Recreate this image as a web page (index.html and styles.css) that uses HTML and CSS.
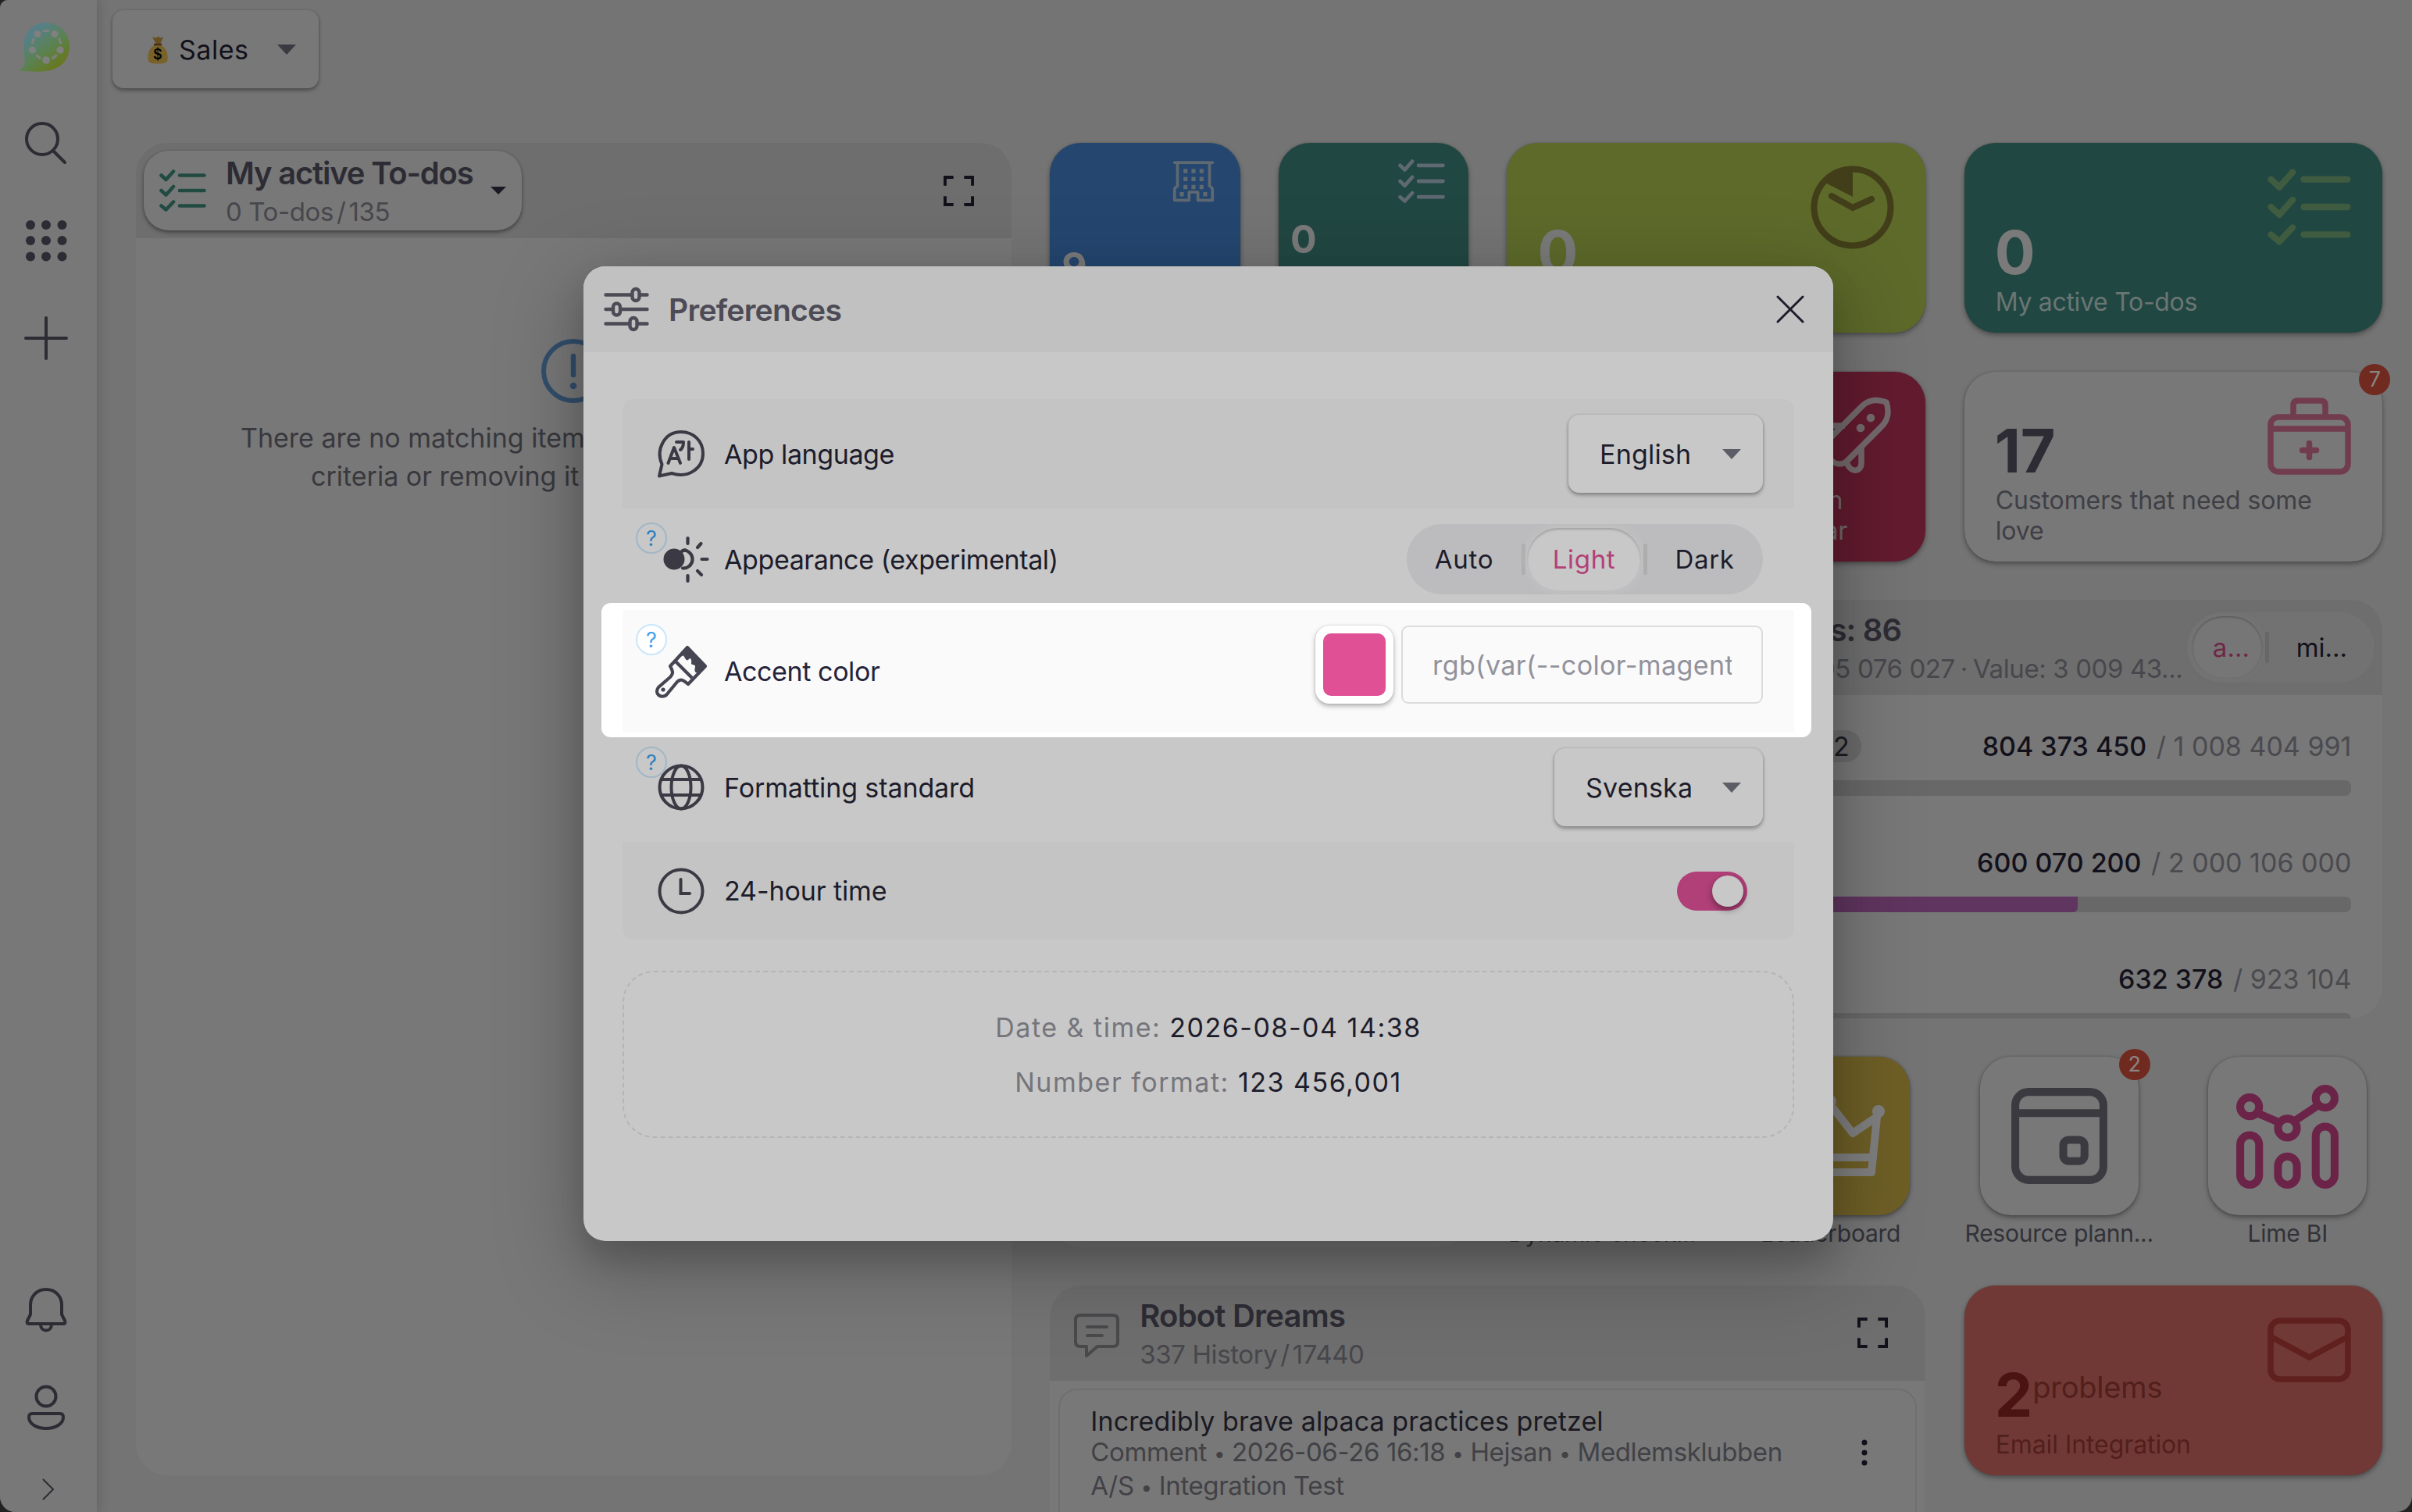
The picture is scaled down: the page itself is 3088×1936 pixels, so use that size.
FILE: index.html
```html
<!DOCTYPE html>
<html lang="en">
<head>
  <meta charset="UTF-8" />
  <meta name="viewport" content="width=device-width, initial-scale=1.0"/>
  <title>Preferences</title>
  <link rel="stylesheet" href="styles.css">
</head>
<body>
  <svg class="defs" width="0" height="0">
    <defs>
      <symbol id="todo" viewBox="0 0 60 54" preserveAspectRatio="none">
        <g fill="none" stroke="currentColor" stroke-width="4.6" stroke-linecap="round" stroke-linejoin="round">
          <path d="M2.5 7.5l6 5.500L18 2.500M26 7.500h31.500"/>
          <path d="M2.500 27l6 5.500L18 22M26 27h31.500"/>
          <path d="M2.500 46.500l6 5L18 41.500M26 46.500h31.500"/>
        </g>
      </symbol>
      <symbol id="expand" viewBox="0 0 40 40">
        <path d="M2 13V2h11M27 2h11v11M38 27v11H27M13 38H2V27" fill="none" stroke="currentColor" stroke-width="4"/>
      </symbol>
    </defs>
  </svg>

  <div class="app">
    <nav class="sidebar">
      <svg class="logo" viewBox="0 0 64 64">
        <defs>
          <linearGradient id="lime" x1="0.1" y1="0.1" x2="0.75" y2="0.9">
            <stop offset="0.2" stop-color="#568086"/>
            <stop offset="0.6" stop-color="#5b8252"/>
            <stop offset="1" stop-color="#67781f"/>
          </linearGradient>
        </defs>
        <path d="M34 0C51 0 64 13 64 30C64 51 48 62 28 62.500C18 63 6 62.500 1 61.500C-1 60 1 59 3 58C8 54 7 49 6 42C5 36 5 31 5.500 26C7 10 19 0 34 0Z" fill="url(#lime)"/>
        <g fill="#808080">
          <circle cx="23" cy="14.500" r="4.600"/><circle cx="45" cy="14.500" r="4.600"/>
          <circle cx="16.500" cy="35" r="4.600"/><circle cx="52" cy="35" r="4.600"/><circle cx="34" cy="48" r="4.800"/>
        </g>
        <path d="M31 10.500h6M51 21l1.600 5M18 21l-1.600 5M22 42l4 3.500M47 42l-4.500 3.500" stroke="#808080" stroke-width="3" stroke-linecap="round"/>
      </svg>
      <svg class="nav-icon" viewBox="0 0 60 60">
        <g fill="none" stroke="currentColor" stroke-width="4" stroke-linecap="round"><circle cx="25" cy="25" r="20"/><path d="M39 40l15 15"/></g>
      </svg>
      <svg class="nav-icon" viewBox="0 0 60 60">
        <g fill="currentColor">
          <circle cx="10" cy="10" r="6"/><circle cx="30" cy="10" r="6"/><circle cx="50.500" cy="10" r="6"/>
          <circle cx="10" cy="30" r="6"/><circle cx="30" cy="30" r="6"/><circle cx="50.500" cy="30" r="6"/>
          <circle cx="10" cy="50.500" r="6"/><circle cx="30" cy="50.500" r="6"/><circle cx="50.500" cy="50.500" r="6"/>
        </g>
      </svg>
      <svg class="nav-icon" viewBox="0 0 60 60">
        <path d="M4 30h52M30 4v52" stroke="currentColor" stroke-width="4" stroke-linecap="round"/>
      </svg>
      <span class="spacer"></span>
      <svg class="nav-icon" viewBox="0 0 60 60">
        <g fill="none" stroke="currentColor" stroke-width="4" stroke-linejoin="round">
          <path d="M30 3C18 3 10 12 10 23v12l-4 8c-1 3 0 4 2 4h44c2 0 3-1 2-4l-4-8V23C50 12 42 3 30 3Z"/>
          <path d="M23 48c0 10 14 10 14 0"/>
        </g>
      </svg>
      <svg class="nav-icon" viewBox="0 0 60 60">
        <g fill="none" stroke="currentColor" stroke-width="4">
          <circle cx="30" cy="15" r="12.500"/>
          <path d="M12 37h36c3 0 4 2 4 5 0 8-10 14-22 14S8 50 8 42c0-3 1-5 4-5Z"/>
        </g>
      </svg>
      <svg class="nav-chevron" viewBox="0 0 16 28"><path d="M1.500 1.500L14 14 1.500 26.500" fill="none" stroke="currentColor" stroke-width="2" stroke-linecap="round"/></svg>
    </nav>

    <main class="main">
      <button class="select dashboard-select">
        <svg class="moneybag" viewBox="0 0 26 36">
          <path d="M6 2l5 1 3-2 2 2 4-1-4 9h-5Z" fill="#67501f"/>
          <path d="M9 12c-8 5-9 12-8.500 19C1 35 4 36 13 36s12-1 12.500-5C26 24 25 17 17 12Z" fill="#79622a"/>
          <path d="M9 11.500h8" stroke="#4a2b17" stroke-width="2.500" stroke-linecap="round"/>
          <text x="13" y="30.500" text-anchor="middle" font-size="18" font-weight="600">$</text>
        </svg>
        <span>Sales</span>
        <i class="caret"></i>
      </button>

      <div class="dashboard">
        <section class="widget todos">
          <header class="widget-header">
            <div class="view-button">
              <svg class="view-icon"><use href="#todo"/></svg>
              <div class="headings">
                <h2>My active To-dos</h2>
                <p>0 To-dos<span class="slash">/</span>135</p>
              </div>
              <i class="caret small"></i>
            </div>
            <svg class="expand"><use href="#expand"/></svg>
          </header>
          <div class="empty">
            <svg class="empty-icon" viewBox="0 0 82 82">
              <circle cx="41" cy="41" r="38" fill="none" stroke="currentColor" stroke-width="6"/>
              <path d="M41 22v24" stroke="currentColor" stroke-width="6.500" stroke-linecap="round"/>
              <circle cx="41" cy="60" r="4.300" fill="currentColor"/>
            </svg>
            <p class="empty-first">There are no matching items.</p>
            <p class="empty-second">criteria or removing it</p>
          </div>
        </section>

        <div class="tile small blue">
          <svg class="tile-icon" viewBox="0 0 60 60">
            <g fill="none" stroke="currentColor" stroke-width="4">
              <path d="M4 4.500h52" stroke-linecap="round"/><path d="M8 5v33M52 5v33"/>
              <path d="M8 38c-3 0-4 1-4 4v14h20V45h12v11h20V42c0-3-1-4-4-4" stroke-linejoin="round"/>
            </g>
            <path d="M19 13v6M30 13v6M41 13v6M19 24v6M30 24v6M41 24v6M19 35v6M30 35v6M41 35v6M14 45v6M46 45v6" stroke="currentColor" stroke-width="5.500"/>
          </svg>
          <b>9</b>
        </div>
        <div class="tile small teal">
          <svg class="tile-icon"><use href="#todo"/></svg>
          <b>0</b>
        </div>
        <div class="tile lime">
          <svg class="tile-icon" viewBox="0 0 107 107">
            <circle cx="53.500" cy="53.500" r="49" fill="none" stroke="currentColor" stroke-width="8"/>
            <path d="M54 6v34L19 22C28 11 40 6 54 6Z" fill="currentColor"/>
            <path d="M27 39l27 15 24-11" fill="none" stroke="currentColor" stroke-width="8" stroke-linecap="round"/>
          </svg>
          <b>0</b>
          <p>&nbsp;</p>
        </div>
        <div class="tile teal active-todos">
          <svg class="tile-icon"><use href="#todo"/></svg>
          <b>0</b>
          <p>My active To-dos</p>
        </div>

        <section class="widget hidden-list"></section>

        <div class="tile pink">
          <svg class="tile-icon" viewBox="0 0 107 107">
            <g fill="none" stroke="currentColor" stroke-width="7.500" stroke-linejoin="round">
              <path d="M97 10C86 6 75 7 67 14L18 63c-6 7-2 13 4 18l6 5c6 4 13 4 18 0l44-44c9-8 11-20 7-32Z"/>
              <path d="M44 40H20L8 52l16 8M65 67v21c0 11-13 13-18 1"/>
            </g>
            <circle cx="77" cy="30" r="5.300" fill="currentColor"/><circle cx="64" cy="43" r="5.300" fill="currentColor"/>
          </svg>
          <p class="pink-label"><span>with</span><br>year</p>
        </div>
        <div class="tile plain customers">
          <svg class="tile-icon" viewBox="0 0 107 107">
            <g fill="none" stroke="currentColor" stroke-width="7.500">
              <rect x="4" y="29" width="99" height="70" rx="10"/>
              <path d="M4 44h99M33 28V14c0-4 2-6 6-6h29c4 0 6 2 6 6v14"/>
              <path d="M53.500 62.500v18M44.500 71.500h18" stroke-linecap="round"/>
            </g>
          </svg>
          <b>17</b>
          <p>Customers that need some love</p>
          <span class="badge">7</span>
        </div>

        <section class="widget progress">
          <header class="widget-header">
            <div class="headings">
              <h2>Deals: 86</h2>
              <p>Weighted value: 1 105 076 027<span class="dot">·</span>Value: 3 009 43...</p>
            </div>
            <div class="segmented compact">
              <span class="selected">a...</span><i></i><span>mi...</span>
            </div>
          </header>
          <div class="progress-row">
            <p><span class="chip">42</span><strong>804 373 450</strong> / 1 008 404 991</p>
            <div class="bar"></div>
          </div>
          <div class="progress-row">
            <p><strong>600 070 200</strong> / 2 000 106 000</p>
            <div class="bar"><div class="fill" style="width: 66.35%"></div></div>
          </div>
          <div class="progress-row">
            <p><strong>632 378</strong> / 923 104</p>
            <div class="bar"></div>
          </div>
        </section>

        <div class="shortcut checklist">
          <div class="shortcut-tile"></div>
          <span>Dynamic check...</span>
        </div>
        <div class="shortcut">
          <div class="shortcut-tile yellow">
            <svg viewBox="0 0 141 141">
              <g fill="none" stroke="currentColor" stroke-width="10" stroke-linejoin="round">
                <path d="M18 117L11 46l30 21 29-37 29 37 31-21-7 71Z"/><path d="M18 98h105"/>
              </g>
              <circle cx="9" cy="39" r="8" fill="currentColor"/><circle cx="70" cy="26" r="8" fill="currentColor"/><circle cx="132" cy="39" r="8" fill="currentColor"/>
            </svg>
          </div>
          <span>Leaderboard</span>
        </div>
        <div class="shortcut">
          <div class="shortcut-tile">
            <svg viewBox="0 0 140 140" class="grey">
              <g fill="none" stroke="currentColor" stroke-width="10">
                <rect x="14" y="14" width="112" height="112" rx="17"/>
                <path d="M14 41h112"/><rect x="75" y="75" width="27" height="27" rx="7"/>
              </g>
            </svg>
            <span class="badge">2</span>
          </div>
          <span>Resource plann...</span>
        </div>
        <div class="shortcut">
          <div class="shortcut-tile">
            <svg viewBox="0 0 140 140" class="magenta">
              <g fill="none" stroke="currentColor" stroke-width="10">
                <circle cx="22" cy="33" r="12"/><circle cx="70" cy="60" r="12"/><circle cx="118" cy="22" r="12"/>
                <path d="M32 41l28 12M79 51l30-20"/>
                <rect x="10" y="69" width="24" height="63" rx="12"/><rect x="58" y="96" width="24" height="36" rx="12"/><rect x="106" y="58" width="24" height="74" rx="12"/>
              </g>
            </svg>
          </div>
          <span>Lime BI</span>
        </div>

        <section class="widget robots">
          <header class="widget-header">
            <svg class="comment-icon" viewBox="0 0 58 58">
              <g fill="none" stroke="currentColor" stroke-width="4" stroke-linejoin="round" stroke-linecap="round">
                <path d="M8 3h42c4 0 6 2 6 6v28c0 4-2 6-6 6H30L16 55V43H8c-4 0-6-2-6-6V9c0-4 2-6 6-6Z"/>
                <path d="M17 18h25M17 29h19"/>
              </g>
            </svg>
            <div class="headings">
              <h2>Robot Dreams</h2>
              <p>337 History<span class="slash">/</span>17440</p>
            </div>
            <svg class="expand"><use href="#expand"/></svg>
          </header>
          <article class="history">
            <div>
              <h3>Incredibly brave alpaca practices pretzel</h3>
              <p>Comment <i>•</i> 2026-06-26 16:18 <i>•</i> Hejsan <i>•</i> Medlemsklubben<br>A/S <i>•</i> Integration Test</p>
            </div>
            <svg class="more" viewBox="0 0 8 34"><g fill="currentColor"><circle cx="4" cy="4" r="3.500"/><circle cx="4" cy="17" r="3.500"/><circle cx="4" cy="30" r="3.500"/></g></svg>
          </article>
        </section>

        <div class="tile red">
          <svg class="tile-icon" viewBox="0 0 107 107">
            <g fill="none" stroke="currentColor" stroke-width="7.500">
              <rect x="4" y="16" width="99" height="75" rx="12"/><path d="M5 37l48.500 26L102 37"/>
            </g>
          </svg>
          <div class="value-row"><b>2</b><small>problems</small></div>
          <p>Email Integration</p>
        </div>
      </div>
    </main>
  </div>

  <div class="modal">
    <header class="modal-header">
      <svg class="modal-icon" viewBox="0 0 58 58">
        <g fill="none" stroke="currentColor" stroke-width="4.400" stroke-linecap="round">
          <path d="M2.500 10.500h32M46 10.500h9.500M2.500 29h8M22 29h33.500M2.500 47.500h29M43 47.500h12.500"/>
          <rect x="36.500" y="3" width="9" height="15" rx="4.500"/><rect x="12" y="21.500" width="9" height="15" rx="4.500"/><rect x="33.500" y="40" width="9" height="15" rx="4.500"/>
        </g>
      </svg>
      <h1>Preferences</h1>
      <svg class="close" viewBox="0 0 36 36"><path d="M2 2l32 32M34 2L2 34" stroke="currentColor" stroke-width="3" stroke-linecap="round"/></svg>
    </header>

    <div class="modal-body">
      <div class="row language">
        <svg class="row-icon" viewBox="0 0 64 64">
          <path d="M4 60.500l3.500-15C-1 26 11 4 32 4c16 0 28 12 28 27.500C60 51 41 64 20 57Z" fill="none" stroke="currentColor" stroke-width="4" stroke-linejoin="round"/>
          <path d="M15.500 44L23 24l8 20M18 38h10M26 17h9c0 5-1 8-4 10M42 17v22M42 26h5" fill="none" stroke="currentColor" stroke-width="4" stroke-linecap="round" stroke-linejoin="round"/>
        </svg>
        <span class="label">App language</span>
        <button class="select">English<i class="caret"></i></button>
      </div>

      <div class="row appearance">
        <span class="help">?</span>
        <svg class="row-icon" viewBox="0 0 64 64">
          <circle cx="23" cy="32" r="13.500" fill="currentColor"/>
          <g fill="none" stroke="currentColor" stroke-width="4.200" stroke-linecap="round">
            <path d="M36 20.500a11.500 11.500 0 1 1-2 23"/>
            <path d="M31 24q3-4 7-3.500M40.500 5v7M57.500 12l-4.500 5M58.500 32h7M53 47l5 5M40.500 53v7"/>
          </g>
        </svg>
        <span class="label">Appearance (experimental)</span>
        <div class="segmented">
          <span>Auto</span><i></i><span class="selected">Light</span><i></i><span>Dark</span>
        </div>
      </div>

      <div class="row accent">
        <span class="help">?</span>
        <svg class="row-icon" viewBox="0 0 68 68">
          <g fill="none" stroke="currentColor" stroke-width="4.200" stroke-linejoin="round">
            <path d="M42 3L20 27c5 9 3 10 0 14L5 54c-6 8 3 15 10 10l14-17c4-4 7-3 14 3l22-23Z"/>
            <path d="M26 20l22 22"/>
          </g>
          <path d="M42 3l-9 10c1 4 3-2 5 2s4 6 6 3 4 2 3 5 6 1 5 5-1 8 3 7l11-8Z" fill="currentColor"/>
          <circle cx="11" cy="57" r="2.600" fill="currentColor"/>
        </svg>
        <span class="label">Accent color</span>
        <div class="color-picker">
          <div class="swatch"><div></div></div>
          <div class="input"><span>rgb(var(--color-magenta</span></div>
        </div>
      </div>

      <div class="row formatting">
        <span class="help">?</span>
        <svg class="row-icon" viewBox="0 0 64 64">
          <g fill="none" stroke="currentColor" stroke-width="4"><circle cx="32" cy="32" r="27.500"/><ellipse cx="32" cy="32" rx="12.500" ry="27.500"/><path d="M7 22h50M7 42h50"/></g>
        </svg>
        <span class="label">Formatting standard</span>
        <button class="select svenska">Svenska<i class="caret"></i></button>
      </div>

      <div class="row clock">
        <svg class="row-icon" viewBox="0 0 64 64">
          <g fill="none" stroke="currentColor" stroke-width="4"><circle cx="32" cy="32" r="27.500"/><path d="M31.500 17v18H43" stroke-linecap="round"/></g>
        </svg>
        <span class="label">24-hour time</span>
        <div class="toggle"></div>
      </div>

      <div class="preview">
        <p>Date &amp; time: <strong>2026-08-04 14:38</strong></p>
        <p>Number format: <strong>123 456,001</strong></p>
      </div>
    </div>
  </div>
</body>
</html>
```
FILE: styles.css
```css
:root {
  --page: #747474;
  --surface: #787878;
  --header: #6e6e6e;
  --ink: #2d2c34;
  --muted: #47474c;
  --modal: #c8c8c8;
  --text: #1d1c2b;
}

* {
  box-sizing: border-box;
  margin: 0;
  padding: 0;
}

html {
  background: #222;
}

body {
  width: 3088px;
  height: 1936px;
  overflow: hidden;
  position: relative;
  font-family: Inter, "Liberation Sans", sans-serif;
  font-size: 34px;
  color: var(--ink);
}

.defs {
  position: absolute;
}

.app {
  display: flex;
  height: 1936px;
  overflow: hidden;
  background: var(--page);
  border-radius: 10px 0 20px 20px;
}

/* Sidebar */
.sidebar {
  width: 124px;
  flex: none;
  display: flex;
  flex-direction: column;
  padding: 29px 0 15px 25px;
  background: var(--surface);
  box-shadow: 0 0 16px rgba(0, 0, 0, 0.2);
  color: var(--ink);
}

.logo {
  width: 64px;
  height: 64px;
  margin-bottom: 60px;
}

.nav-icon {
  width: 60px;
  height: 60px;
  margin: 0 0 65px 4px;
}

.spacer {
  flex: 1;
}

.nav-chevron {
  width: 16px;
  height: 28px;
  margin-left: 29px;
  margin-top: -5px;
}

/* Dashboard */
.main {
  flex: 1;
  padding: 13px 0 0 20px;
}

.select {
  display: flex;
  align-items: center;
  height: 100px;
  border: none;
  border-radius: 14px;
  background: var(--modal);
  box-shadow: 0 3px 5px rgba(0, 0, 0, 0.32), 0 0 3px rgba(0, 0, 0, 0.16);
  font: inherit;
  letter-spacing: 0.2px;
  color: var(--text);
}

.caret {
  border: 12px solid transparent;
  border-top: 13px solid #5d5d67;
  border-bottom: 0;
}

.caret.small {
  border-width: 10px 10px 0;
  border-top-color: #1b1a24;
}

.dashboard-select {
  width: 264px;
  padding-left: 45px;
  background: var(--surface);
  color: #12111b;
}

.dashboard-select span {
  margin-left: 14px;
  letter-spacing: 0.5px;
}

.dashboard-select .caret {
  margin-left: 37px;
  border-top-color: #3a3a40;
}

.moneybag {
  width: 26px;
  height: 37px;
}

.dashboard {
  display: grid;
  grid-template-columns: repeat(10, 243.2px);
  grid-auto-rows: 243.2px;
  gap: 49.4px;
  margin: 70px 0 0 30px;
}

.widget {
  overflow: hidden;
  border-radius: 40px;
  background: var(--surface);
}

.widget-header {
  display: flex;
  align-items: center;
  height: 122px;
  background: var(--header);
}

.headings {
  padding-top: 3px;
}

h2 {
  font-size: 40px;
  line-height: 48px;
  font-weight: 600;
  letter-spacing: -0.8px;
  white-space: nowrap;
}

.headings p {
  margin-top: 3px;
  font-size: 33px;
  line-height: 44px;
  letter-spacing: -0.4px;
  color: var(--muted);
  white-space: nowrap;
}

.slash {
  margin: 0 4px;
}

.expand {
  width: 39px;
  height: 39px;
  margin-left: auto;
  margin-right: 48px;
  color: #12111b;
}

.todos {
  grid-area: 1 / 1 / 7 / 5;
}

.todos h2 {
  letter-spacing: -1.2px;
}

.view-button {
  display: flex;
  align-items: center;
  width: 484px;
  height: 102px;
  margin-left: 10px;
  border-radius: 32px;
  background: var(--surface);
  box-shadow: 0 3px 5px rgba(0, 0, 0, 0.35), 0 0 3px rgba(0, 0, 0, 0.16);
}

.view-icon {
  width: 60px;
  height: 54px;
  margin: 0 25px 0 20px;
  color: #214b42;
}

.view-button .headings {
  width: 339px;
}

.empty {
  padding-top: 129px;
  color: #38383e;
}

.empty-icon {
  display: block;
  width: 82px;
  height: 82px;
  margin: 0 0 20px 519px;
  color: #324f6c;
}

.empty p {
  line-height: 49px;
  white-space: nowrap;
}

.empty-first {
  padding-left: 134px;
}

.empty-second {
  padding-left: 224px;
}

.tile {
  position: relative;
  display: flex;
  flex-direction: column;
  justify-content: flex-end;
  padding: 0 40px 20px;
  border-radius: 40px;
  box-shadow: 0 3px 6px rgba(0, 0, 0, 0.35), 0 0 2px rgba(0, 0, 0, 0.2);
}

.tile-icon {
  flex: none;
  width: 107px;
  height: 107px;
  margin: 29px 0 auto auto;
}

.tile:not(.small) .tile-icon {
  margin-bottom: -107px;
}

.active-todos .tile-icon {
  height: 98px;
  margin-top: 33px;
}

.tile b {
  margin: 0 0 5px -1px;
  font-size: 77px;
  line-height: 78px;
  font-weight: 700;
}

.tile p {
  font-size: 32px;
  line-height: 39px;
  letter-spacing: -0.1px;
}

.tile:not(.small) .tile-icon + * {
  margin-top: auto;
}

.tile.small {
  padding: 0 30px 0 16px;
}

.small .tile-icon {
  width: 60px;
  height: 56px;
  margin-top: 21px;
  color: #5f6972;
}

.small b {
  font-size: 50px;
  line-height: 50px;
  color: #7a7a7a;
}

.blue {
  background: #24466f;
}

.blue b {
  margin-bottom: 60px;
}

.teal {
  background: #214742;
  color: #6a7674;
}

.teal b {
  color: #7a7a7a;
}

.small.teal b {
  margin-bottom: 95px;
}

.lime {
  grid-column: 7 / 9;
  background: #5d6a2a;
}

.lime .tile-icon {
  color: #413e19;
}

.lime b {
  color: #7a7a7a;
}

.active-todos {
  grid-column: 9 / 11;
}

.active-todos .tile-icon {
  color: #3f5b40;
}

.active-todos p {
  letter-spacing: -0.3px;
}

.hidden-list {
  grid-area: 2 / 5 / 6 / 7;
}

.pink {
  grid-area: 2 / 7 / 3 / 9;
  background: #631b2f;
  color: #746a6d;
}

.pink-label {
  padding-right: 60px;
  text-align: right;
}

.pink-label span {
  margin-right: 6px;
}

.plain {
  background: var(--surface);
}

.customers {
  grid-area: 2 / 9 / 3 / 11;
}

.customers .tile-icon {
  color: #713c4e;
}

.customers p {
  color: #3f3f45;
}

/* Notification count, hangs over the corner of a tile */
.badge {
  position: absolute;
  top: -10px;
  right: -10px;
  width: 40px;
  height: 40px;
  border-radius: 50%;
  background: #712a20;
  color: #898585;
  font-size: 27px;
  line-height: 40px;
  text-align: center;
}

.progress {
  grid-area: 3 / 7 / 5 / 11;
}

.progress .widget-header {
  justify-content: flex-end;
  padding-right: 10px;
}

.progress .headings {
  text-align: right;
}

.progress h2 {
  padding-right: 360px;
}

.dot {
  margin: 0 7px;
}

.segmented {
  display: flex;
  align-items: center;
  width: 456px;
  height: 90px;
  border-radius: 45px;
  background: #bcbcbf;
  font-size: 33px;
  letter-spacing: 0.7px;
}

.segmented span {
  width: 147px;
  line-height: 80px;
  text-align: center;
}

.segmented i {
  width: 5px;
  height: 40px;
  border-radius: 3px;
  background: #adadb0;
}

.segmented .selected {
  width: 146px;
  margin: 0 3px 0 2px;
  border-radius: 40px;
  background: var(--modal);
  box-shadow: 0 0 12px rgba(205, 200, 195, 0.7), inset 0 2px 3px rgba(0, 0, 0, 0.2);
  color: #b33f77;
}

.segmented.compact {
  width: 240px;
  margin-left: 6px;
  background: #727272;
  color: #12111b;
  letter-spacing: 0;
}

.compact span {
  width: 134px;
}

.segmented.compact .selected {
  width: 91px;
  margin: 0 3px 0 6px;
  padding-left: 9px;
  background: #767676;
  box-shadow: 0 0 10px rgba(128, 128, 128, 0.4), inset 0 1px 3px rgba(0, 0, 0, 0.3);
  color: #6f2748;
}

.compact i {
  background: #676767;
}

.progress-row {
  height: 149px;
  padding: 42px 40px 0;
  text-align: right;
  color: #4a4a4f;
}

.progress-row p {
  line-height: 48px;
  margin-bottom: 19px;
}

.progress-row strong {
  margin-right: 3px;
  font-weight: 500;
  color: #12111b;
}

.chip {
  margin-right: 155px;
  padding: 0 15px;
  border-radius: 20px;
  background: #6b6b6b;
  color: #1b1a24;
}

.bar {
  height: 20px;
  overflow: hidden;
  border-radius: 8px;
  background: #686868;
}

.fill {
  height: 20px;
  background: #60355f;
  border-radius: 0 0 6px 0;
}

.shortcut {
  grid-row: 5;
  display: flex;
  flex-direction: column;
  align-items: center;
  font-size: 30px;
  line-height: 46px;
  letter-spacing: -0.25px;
  color: #323138;
  white-space: nowrap;
}

.checklist {
  grid-column: 7;
}

.shortcut-tile {
  position: relative;
  width: 203px;
  height: 203px;
  flex: none;
  padding: 31px;
  border-radius: 40px;
  background: var(--surface);
  box-shadow: 0 3px 6px rgba(0, 0, 0, 0.35), 0 0 3px rgba(0, 0, 0, 0.2);
  color: #807f7f;
}

.shortcut-tile svg {
  display: block;
  width: 141px;
  height: 141px;
}

.shortcut-tile .badge {
  right: -15px;
}

.shortcut-tile .grey {
  color: #3b3a40;
}

.shortcut-tile .magenta {
  color: #6b2447;
}

.yellow {
  background: #6e5f26;
}

.robots {
  grid-area: 6 / 5 / 9 / 9;
}

.comment-icon {
  width: 58px;
  height: 58px;
  margin: 6px 26px 0 31px;
  color: #4a4a4d;
}

.history {
  display: flex;
  align-items: flex-start;
  justify-content: space-between;
  height: 300px;
  margin: 10px 11px;
  padding: 18px 61px 0 39px;
  border: 2px solid #6f6f6f;
  border-radius: 24px;
}

h3 {
  font-size: 34px;
  line-height: 44px;
  font-weight: 400;
  letter-spacing: 0.1px;
  color: #1a1922;
}

.history p {
  margin-top: -3px;
  font-size: 33px;
  line-height: 40px;
  letter-spacing: -0.37px;
  color: #414146;
}

.history i {
  font-size: 26px;
  font-style: normal;
}

.more {
  width: 8px;
  height: 34px;
  margin-top: 45px;
  color: #12111b;
}

.red {
  grid-area: 6 / 9 / 7 / 11;
  background: #713935;
  color: #511f1c;
}

.red .tile-icon {
  color: #5f201e;
}

.value-row {
  display: flex;
}

.value-row b {
  color: #4a1412;
}

.value-row small {
  font-size: 38px;
  line-height: 58px;
  letter-spacing: -0.2px;
}

/* Preferences dialog */
.modal {
  position: absolute;
  top: 341px;
  left: 747px;
  width: 1600px;
  height: 1248px;
  border-radius: 28px;
  background: var(--modal);
  box-shadow: 0 24px 40px rgba(0, 0, 0, 0.16), 0 30px 110px 10px rgba(0, 0, 0, 0.22);
  color: var(--text);
}

.modal-header {
  display: flex;
  align-items: center;
  height: 110px;
  padding: 0 37px 0 26px;
  border-radius: 28px 28px 0 0;
  background: #c1c1c1;
}

.modal-icon {
  width: 58px;
  height: 58px;
  color: #4c4b56;
}

h1 {
  flex: 1;
  margin-left: 25px;
  font-size: 39px;
  font-weight: 600;
  letter-spacing: -0.7px;
  color: #4c4b56;
}

.close {
  width: 36px;
  height: 36px;
}

.modal-body {
  isolation: isolate;
  padding: 60px 50px 0;
}

.row {
  position: relative;
  display: flex;
  align-items: center;
  padding: 0 40px 0 43px;
}

.row-icon {
  width: 64px;
  height: 64px;
  overflow: visible;
  color: #3b3a44;
}

.label {
  flex: 1;
  margin-left: 23px;
  letter-spacing: -0.4px;
}

.formatting .label,
.clock .label {
  letter-spacing: -0.1px;
}

.language {
  height: 140px;
  border-radius: 14px 14px 0 0;
  background: #c4c4c4;
}

.row .select {
  width: 249px;
  justify-content: space-between;
  padding: 0 28px 0 40px;
}

.row .select.svenska {
  width: 267px;
}

.appearance {
  height: 130px;
}

.accent {
  height: 157px;
  background: #fafafa;
  color: #24233a;
}

.accent::before {
  content: "";
  position: absolute;
  inset: -9px -22px -6px -27px;
  z-index: -1;
  border-radius: 12px;
  background: #fff;
}

.accent .row-icon {
  width: 68px;
  height: 68px;
  margin: 0 -2px;
  color: #464552;
}

.help {
  position: absolute;
  top: 18px;
  left: 17px;
  width: 40px;
  height: 40px;
  border: 2px solid #a0b7c6;
  border-radius: 50%;
  font-size: 27px;
  line-height: 37px;
  text-align: center;
  color: #3180c0;
}

.accent .help {
  border-color: #c9e7fb;
  background: #fff;
  color: #42a0ee;
}

.color-picker {
  display: flex;
  gap: 10px;
  margin-bottom: 17px;
}

.swatch {
  width: 100px;
  height: 100px;
  padding: 10px;
  border-radius: 18px;
  background: #fff;
  box-shadow: 0 3px 6px rgba(0, 0, 0, 0.3), 0 0 2px rgba(0, 0, 0, 0.2);
}

.swatch div {
  height: 80px;
  border-radius: 10px;
  background: #e05095;
}

.input {
  width: 463px;
  height: 100px;
  padding: 0 38px;
  border: 2px solid #dcdcde;
  border-radius: 9px;
  line-height: 98px;
  letter-spacing: 0.4px;
  color: #92929c;
}

.input span {
  display: block;
  overflow: hidden;
  white-space: nowrap;
}

.formatting {
  height: 140px;
}

.clock {
  height: 125px;
  border-radius: 0 0 14px 14px;
  background: #c4c4c4;
}

.toggle {
  width: 90px;
  height: 50px;
  margin-right: 20px;
  padding: 5px;
  border-radius: 25px;
  background: #b04077;
}

.toggle::after {
  content: "";
  display: block;
  width: 40px;
  height: 40px;
  margin-left: auto;
  border-radius: 50%;
  background: var(--modal);
  box-shadow: 0 4px 8px rgba(0, 0, 0, 0.4);
}

.preview {
  margin-top: 40px;
  padding: 36px 0 34px;
  border: 2px dashed #b5b5b6;
  border-radius: 40px;
  text-align: center;
  line-height: 70px;
  letter-spacing: 1.5px;
  color: #75757b;
}

.preview strong {
  font-weight: 400;
  color: var(--text);
}
```
